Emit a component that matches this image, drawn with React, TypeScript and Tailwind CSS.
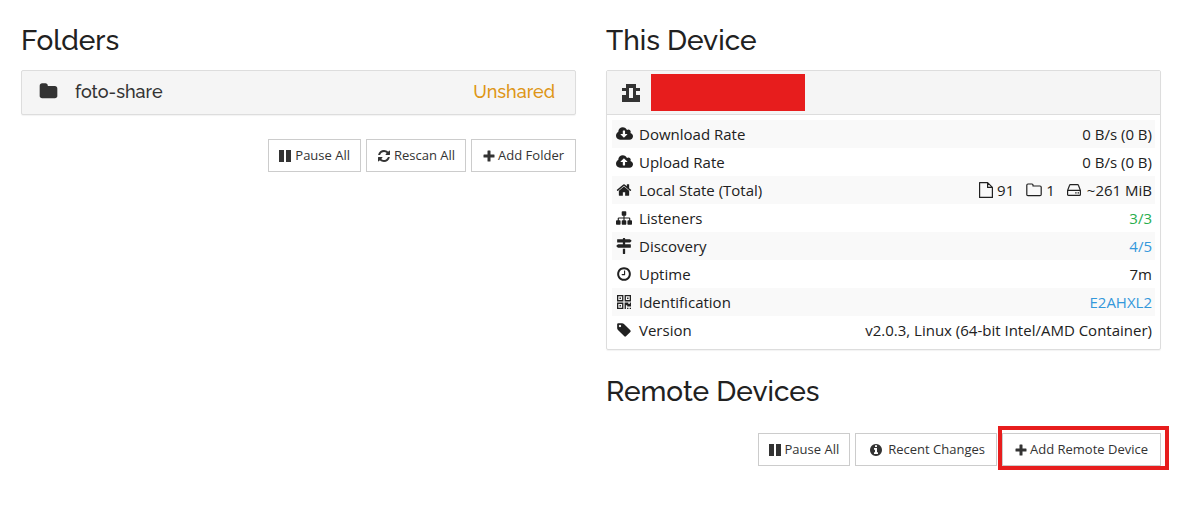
import React from 'react';

interface IconProps {
    className?: string;
}

interface StatRow {
    label: string;
    icon: React.ReactNode;
    value: React.ReactNode;
}

const CLOUD =
    'm640 288q0 159-112.5 271.5t-271.5 112.5h-1088q-185 0-316.5-131.5t-131.5-316.5q0-130 70-240t188-165q-2-30-2-43 0-212 150-362t362-150q156 0 285.5 87t188.5 231q71-62 166-62 106 0 181 75t75 181q0 76-41 138 130 31 213.5 135.5t83.5 238.5z';

const PATHS = {
    folder: 'M1728 608v704q0 92-66 158t-158 66h-1216q-92 0-158-66t-66-158v-960q0-92 66-158t158-66h320q92 0 158 66t66 158v32h672q92 0 158 66t66 158z',
    download:
        'M1280 928q0-14-9-23t-23-9h-224v-352q0-13-9.5-22.5t-22.5-9.5h-192q-13 0-22.5 9.5t-9.5 22.5v352h-224q-13 0-22.5 9.5t-9.5 22.5q0 14 9 23l352 352q9 9 23 9t23-9l351-351q10-12 10-24zm0-64z' + CLOUD,
    upload:
        'M1280 864q0-14-9-23l-352-352q-9-9-23-9t-23 9l-351 351q-10 12-10 24 0 14 9 23t23 9h224v352q0 13 9.5 22.5t22.5 9.5h192q13 0 22.5-9.5t9.5-22.5v-352h224q13 0 22.5-9.5t9.5-22.5z' + CLOUD,
    home: 'M1472 992v480q0 26-19 45t-45 19h-384v-384h-256v384h-384q-26 0-45-19t-19-45v-480q0-1 .5-3t.5-3l575-474 575 474q1 2 1 6zm223-69l-62 74q-8 9-21 11h-3q-13 0-21-7l-692-577-692 577q-12 8-24 7-13-2-21-11l-62-74q-8-10-7-23.5t11-21.5l719-599q32-26 76-26t76 26l244 204v-195q0-14 9-23t23-9h192q14 0 23 9t9 23v408l219 182q10 8 11 21.5t-7 23.5z',
    refresh:
        'M1639 1056q0 5-1 7-64 268-268 434.5t-478 166.5q-146 0-282.5-55t-243.5-157l-129 129q-19 19-45 19t-45-19-19-45v-448q0-26 19-45t45-19h448q26 0 45 19t19 45-19 45l-137 137q71 66 161 102t187 36q134 0 250-65t186-179q11-17 53-117 8-23 30-23h192q13 0 22.5 9.5t9.5 22.5zm25-800v448q0 26-19 45t-45 19h-448q-26 0-45-19t-19-45 19-45l138-138q-148-137-349-137-134 0-250 65t-186 179q-11 17-53 117-8 23-30 23h-199q-13 0-22.5-9.5t-9.5-22.5v-7q65-268 270-434.5t480-166.5q146 0 284 55.5t245 156.5l130-129q19-19 45-19t45 19 19 45z',
    sitemap:
        'M1792 1248v320q0 40-28 68t-68 28h-320q-40 0-68-28t-28-68v-320q0-40 28-68t68-28h96v-192h-512v192h96q40 0 68 28t28 68v320q0 40-28 68t-68 28h-320q-40 0-68-28t-28-68v-320q0-40 28-68t68-28h96v-192h-512v192h96q40 0 68 28t28 68v320q0 40-28 68t-68 28h-320q-40 0-68-28t-28-68v-320q0-40 28-68t68-28h96v-192q0-52 38-90t90-38h512v-192h-96q-40 0-68-28t-28-68v-320q0-40 28-68t68-28h320q40 0 68 28t28 68v320q0 40-28 68t-68 28h-96v192h512q52 0 90 38t38 90v192h96q40 0 68 28t28 68z',
    signs: 'M1745 297q10 10 10 23t-10 23l-141 141q-28 28-68 28h-1344q-26 0-45-19t-19-45v-256q0-26 19-45t45-19h576v-64q0-26 19-45t45-19h128q26 0 45 19t19 45v64h512q40 0 68 28zm-977 919h256v512q0 26-19 45t-45 19h-128q-26 0-45-19t-19-45v-512zm832-512q26 0 45 19t19 45v256q0 26-19 45t-45 19h-1344q-40 0-68-28l-141-141q-10-10-10-23t10-23l141-141q28-28 68-28h512v-192h256v192h576z',
    clock: 'M1024 544v448q0 14-9 23t-23 9h-320q-14 0-23-9t-9-23v-64q0-14 9-23t23-9h224v-352q0-14 9-23t23-9h64q14 0 23 9t9 23zm416 352q0-148-73-273t-198-198-273-73-273 73-198 198-73 273 73 273 198 198 273 73 273-73 198-198 73-273zm224 0q0 209-103 385.5t-279.5 279.5-385.5 103-385.5-103-279.5-279.5-103-385.5 103-385.5 279.5-279.5 385.5-103 385.5 103 279.5 279.5 103 385.5z',
    tag: 'M576 448q0-53-37.5-90.5t-90.5-37.5-90.5 37.5-37.5 90.5 37.5 90.5 90.5 37.5 90.5-37.5 37.5-90.5zm1067 576q0 53-37 90l-491 492q-39 37-91 37-53 0-90-37l-715-716q-38-37-64.5-101t-26.5-117v-416q0-52 38-90t90-38h416q53 0 117 26.5t102 64.5l715 714q37 39 37 91z',
    info: 'M1152 1376v-160q0-14-9-23t-23-9h-96v-512q0-14-9-23t-23-9h-320q-14 0-23 9t-9 23v160q0 14 9 23t23 9h96v320h-96q-14 0-23 9t-9 23v160q0 14 9 23t23 9h448q14 0 23-9t9-23zm-128-896v-160q0-14-9-23t-23-9h-192q-14 0-23 9t-9 23v160q0 14 9 23t23 9h192q14 0 23-9t9-23zm640 416q0 209-103 385.5t-279.5 279.5-385.5 103-385.5-103-279.5-279.5-103-385.5 103-385.5 279.5-279.5 385.5-103 385.5 103 279.5 279.5 103 385.5z'
};

const Glyph: React.FC<IconProps & { name: keyof typeof PATHS; wide?: boolean }> = ({ name, wide, className = 'size-4' }) => (
    <svg viewBox={wide ? '0 0 1920 1792' : '0 0 1792 1792'} className={className} fill="currentColor" aria-hidden="true">
        <path d={PATHS[name]} />
    </svg>
);

const PauseIcon = () => (
    <svg viewBox="0 0 13 12" className="h-3 w-[13px]" fill="currentColor" shapeRendering="crispEdges" aria-hidden="true">
        <path d="M0 0h5v12H0zM7 0h5v12H7z" />
    </svg>
);

const PlusIcon = () => (
    <svg viewBox="0 0 12 12" className="size-3" fill="currentColor" aria-hidden="true">
        <path d="M5 .5h2q.5 0 .5.5v3.5H11q.5 0 .5.5v2q0 .5-.5.5H7.5V11q0 .5-.5.5H5q-.5 0-.5-.5V7.5H1Q.5 7.500.5 7V5q0-.5.5-.5h3.5V1q0-.5.5-.5z" />
    </svg>
);

const QrIcon = () => (
    <svg viewBox="0 0 14 14" className="size-[14px]" fill="currentColor" aria-hidden="true">
        <path
            fillRule="evenodd"
            d="M0 0h6.4v6.4H0zM1.300 1.300v3.800h3.800V1.300zM2.500 2.500h1.400v1.400H2.500zM7.600 0H14v6.400H7.600zM8.900 1.300v3.800h3.800V1.300zM10.100 2.500h1.400v1.400h-1.400zM0 7.600h6.400V14H0zM1.300 8.900v3.800h3.800V8.900zM2.500 10.100h1.400v1.400H2.500zM7.600 7.600h3.800v1.300h1.300V7.600H14v3.800h-3.800v-1.200H8.900V14H7.600zM10.100 12.700h1.300V14h-1.300zM12.700 12.700H14V14h-1.300z"
        />
    </svg>
);

const Identicon = () => (
    <svg viewBox="0 0 18 18" className="size-[18px]" fill="currentColor" shapeRendering="crispEdges" aria-hidden="true">
        <path fillRule="evenodd" d="M4 0h10v4h4v3h-4v4h4v7H0v-7h4V7H0V4h4zM7 4v10h4V4z" />
    </svg>
);

const FileIcon = () => (
    <svg viewBox="0 0 14 16" className="h-4 w-[14px]" fill="none" stroke="currentColor" strokeWidth="1.2" strokeLinejoin="round" aria-hidden="true">
        <path d="M.6.6h8l4.800 4.800v10H.6zM8.600.6v4.800h4.800" />
    </svg>
);

const FolderOutlineIcon = () => (
    <svg viewBox="0 0 16 14" className="h-[14px] w-4" fill="none" stroke="currentColor" strokeWidth="1.2" strokeLinejoin="round" aria-hidden="true">
        <path d="M2 1h4q1 0 1 1v1h7q1.200 0 1.200 1.200v7.200q0 1.200-1.200 1.200H2Q.8 12.600.8 11.400V2.200Q.8 1 2 1z" />
    </svg>
);

const DriveIcon = () => (
    <svg viewBox="0 0 14 12" className="h-3 w-[14px]" fill="none" stroke="currentColor" strokeWidth="1.2" strokeLinejoin="round" aria-hidden="true">
        <path d="M.6 6.400 2.600 1.200Q2.800.6 3.400.6h7.200q.6 0 .8.6l2 5.200v4q0 1-1 1H1.600q-1 0-1-1zM.6 6.400h12.800M8.200 8.900h1.400M10.600 8.900H12" />
    </svg>
);

const ToolButton: React.FC<{ icon: React.ReactNode; children: React.ReactNode; className?: string }> = ({ icon, children, className = 'px-[10px]' }) => (
    <button type="button" className={`flex h-[33px] items-center gap-[3px] border border-[#ccc] bg-white text-[13px] text-[#333] hover:bg-[#eee] ${className}`}>
        {icon}
        {children}
    </button>
);

const Heading: React.FC<{ children: React.ReactNode }> = ({ children }) => (
    <h3 className="font-['Raleway','Lato',sans-serif] text-[28px] font-medium leading-[33px]">{children}</h3>
);

const rows: StatRow[] = [
    { label: 'Download Rate', icon: <Glyph name="download" wide className="h-4 w-[17px]" />, value: '0 B/s (0 B)' },
    { label: 'Upload Rate', icon: <Glyph name="upload" wide className="h-4 w-[17px]" />, value: '0 B/s (0 B)' },
    {
        label: 'Local State (Total)',
        icon: <Glyph name="home" />,
        value: (
            <span className="flex items-center justify-end">
                <FileIcon />
                <span className="ml-1 mr-3">91</span>
                <FolderOutlineIcon />
                <span className="ml-1 mr-3">1</span>
                <DriveIcon />
                <span className="ml-[6px]">~261 MiB</span>
            </span>
        )
    },
    { label: 'Listeners', icon: <Glyph name="sitemap" />, value: <a href="#listeners" className="text-[#29ae4e]">3/3</a> },
    { label: 'Discovery', icon: <Glyph name="signs" />, value: <a href="#discovery" className="text-[#3498db]">4/5</a> },
    { label: 'Uptime', icon: <Glyph name="clock" />, value: '7m' },
    { label: 'Identification', icon: <QrIcon />, value: <a href="#identification" className="text-[#3498db]">E2AHXL2</a> },
    { label: 'Version', icon: <Glyph name="tag" />, value: 'v2.0.3, Linux (64-bit Intel/AMD Container)' }
];

export default function App() {
    return (
        <main className="grid grid-cols-2 gap-[30px] bg-white pb-[60px] pl-[21px] pr-[41px] pt-6 font-['Segoe_UI','Open_Sans',sans-serif] text-[15px] text-[#212121]">
            <section>
                <Heading>Folders</Heading>
                <button type="button" className="mt-[13px] flex h-[45px] w-full items-center rounded-[2px] border border-[#ddd] bg-[#f5f5f5] pb-[2px] pl-[17px] pr-5 font-['Raleway','Lato',sans-serif] text-[18px] font-medium text-[#333] shadow-[0_1px_1px_rgba(0,0,0,0.05)]">
                    <Glyph name="folder" className="size-[19px]" />
                    <span className="ml-[17px]">foto-share</span>
                    <span className="ml-auto text-[#de9616]">Unshared</span>
                </button>
                <div className="mt-6 flex justify-end gap-[5px]">
                    <ToolButton icon={<PauseIcon />}>Pause All</ToolButton>
                    <ToolButton icon={<Glyph name="refresh" className="size-[14px]" />}>Rescan All</ToolButton>
                    <ToolButton icon={<PlusIcon />} className="px-[11px]">Add Folder</ToolButton>
                </div>
            </section>

            <section>
                <Heading>This Device</Heading>
                <div className="mt-[13px] rounded-[2px] border border-[#ddd] shadow-[0_1px_1px_rgba(0,0,0,0.05)]">
                    <div className="flex h-11 items-center border-b border-[#ddd] bg-[#f5f5f5] pl-[15px] text-[#333]">
                        <Identicon />
                        <span className="ml-[11px] h-[37px] w-[154px] bg-[#e71d1d]" />
                    </div>
                    <div className="p-[5px]">
                        <table className="w-full">
                            <tbody>
                                {rows.map((row) => (
                                    <tr key={row.label} className="h-7 leading-5 odd:bg-[#f9f9f9]">
                                        <th scope="row" className="p-0 text-left font-normal">
                                            <span className="flex items-center">
                                                <span className="ml-[3px] mr-[6px] flex w-[18px] justify-center">{row.icon}</span>
                                                {row.label}
                                            </span>
                                        </th>
                                        <td className="p-0 pr-[3px] text-right">{row.value}</td>
                                    </tr>
                                ))}
                            </tbody>
                        </table>
                    </div>
                </div>

                <div className="mt-[25px]">
                    <Heading>Remote Devices</Heading>
                </div>
                <div className="mt-[25px] flex justify-end gap-[5px]">
                    <ToolButton icon={<PauseIcon />}>Pause All</ToolButton>
                    <ToolButton icon={<Glyph name="info" className="mx-[2px] size-[14px]" />} className="px-[11px]">Recent Changes</ToolButton>
                    <div className="relative">
                        <ToolButton icon={<PlusIcon />} className="px-3">Add Remote Device</ToolButton>
                        <span className="pointer-events-none absolute -bottom-1 -left-1 -right-2 -top-[7px] border-4 border-[#e71d1d]" />
                    </div>
                </div>
            </section>
        </main>
    );
}
